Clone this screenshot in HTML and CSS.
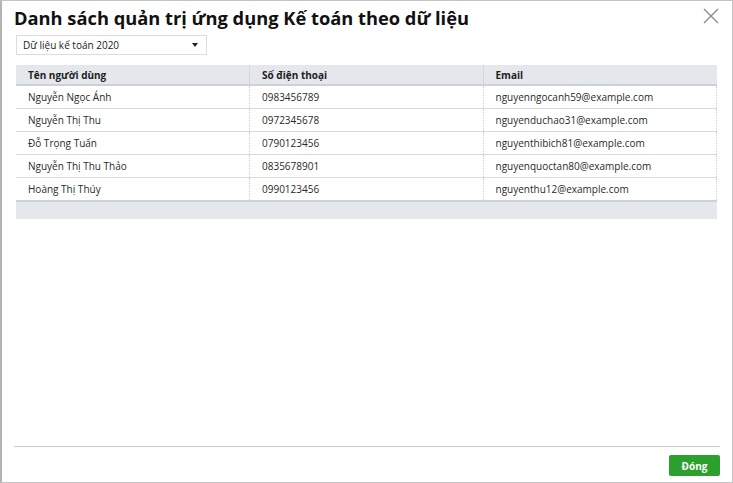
FILE: index.html
```html
<!DOCTYPE html>
<html lang="vi">
<head>
  <meta charset="UTF-8">
  <title>Danh sách quản trị ứng dụng Kế toán theo dữ liệu</title>
  <link rel="stylesheet" href="styles.css">
</head>
<body>
  <div class="dialog">
    <div class="dialog-header">
      <h1>Danh sách quản trị ứng dụng Kế toán theo dữ liệu</h1>
      <button class="close-button" aria-label="Đóng">
        <svg width="16" height="16" viewBox="0 0 16 16">
          <path d="M1 1 L15 15 M15 1 L1 15" stroke="#8a8a8a" stroke-width="1.4" fill="none"/>
        </svg>
      </button>
    </div>
    <div class="dialog-body">
      <div class="select-box">
        <span>Dữ liệu kế toán 2020</span>
        <span class="caret"></span>
      </div>
      <table class="grid">
        <thead>
          <tr>
            <th>Tên người dùng</th>
            <th>Số điện thoại</th>
            <th>Email</th>
          </tr>
        </thead>
        <tbody>
          <tr><td>Nguyễn Ngọc Ánh</td><td>0983456789</td><td>nguyenngocanh59@example.com</td></tr>
          <tr><td>Nguyễn Thị Thu</td><td>0972345678</td><td>nguyenduchao31@example.com</td></tr>
          <tr><td>Đỗ Trọng Tuấn</td><td>0790123456</td><td>nguyenthibich81@example.com</td></tr>
          <tr><td>Nguyễn Thị Thu Thảo</td><td>0835678901</td><td>nguyenquoctan80@example.com</td></tr>
          <tr><td>Hoàng Thị Thúy</td><td>0990123456</td><td>nguyenthu12@example.com</td></tr>
        </tbody>
        <tfoot>
          <tr><td colspan="3"></td></tr>
        </tfoot>
      </table>
    </div>
    <div class="dialog-footer">
      <button class="primary-button">Đóng</button>
    </div>
  </div>
</body>
</html>
```

FILE: styles.css
```css
html, body {
    height: 100%;
}
body {
    margin: 0;
    font-family: "Open Sans", "Noto Sans", sans-serif;
    color: #212121;
    background-color: #ffffff;
}
.dialog {
    box-sizing: border-box;
    height: 100%;
    border: 1px solid #c4c4c4;
    border-left: 2px solid #b4b4b4;
    display: flex;
    flex-direction: column;
}
.dialog-header {
    display: flex;
    justify-content: space-between;
    align-items: flex-start;
    padding: 4px 12px 0 12px;
}
.dialog-header h1 {
    margin: 0;
    font-size: 18.3px;
    font-weight: 700;
    line-height: 25px;
    color: #111;
}
.close-button {
    background: transparent;
    border: none;
    padding: 0;
    margin-top: 3px;
    margin-right: 1px;
    cursor: pointer;
    line-height: 0;
}
.dialog-body {
    flex: 1;
    padding: 5px 14px 0 14px;
}
.select-box {
    box-sizing: border-box;
    width: 191px;
    height: 20px;
    border: 1px solid #dcdcdc;
    display: flex;
    align-items: center;
    justify-content: space-between;
    padding: 0 6px 0 6px;
    font-size: 10px;
    color: #222;
    margin-bottom: 10px;
}
.caret {
    width: 0;
    height: 0;
    border-left: 3px solid transparent;
    border-right: 3px solid transparent;
    border-top: 4px solid #222;
    margin-right: 2px;
}
.grid {
    width: 701px;
    border-collapse: collapse;
    table-layout: fixed;
    font-size: 10px;
}
.grid th {
    background-color: #e4e8ed;
    text-align: left;
    font-weight: 700;
    height: 19px;
    padding: 0 12px;
    border-bottom: 2px solid #cdd0d4;
    border-left: 1px solid #d2d5d9;
}
.grid th:first-child,
.grid td:first-child {
    border-left: none;
}
.grid td {
    height: 22px;
    padding: 0 12px;
    border-bottom: 1px solid #dadada;
    border-left: 1px dotted #cfcfcf;
    color: #2a2a2a;
}
.grid tbody td:last-child {
    border-right: 1px dotted #cfcfcf;
}
.grid tbody tr:last-child td {
    border-bottom: 2px solid #cdd0d4;
}
.grid tfoot td {
    height: 17px;
    background-color: #e4e8ed;
    border: none;
}
.dialog-footer {
    margin: 0 12px;
    border-top: 1px solid #cccccc;
    padding: 8px 0 6px 0;
    display: flex;
    justify-content: flex-end;
}
.primary-button {
    background-color: #2ca02c;
    color: #ffffff;
    border: none;
    border-radius: 2px;
    font-family: inherit;
    font-size: 10px;
    font-weight: 700;
    width: 51px;
    height: 21px;
    cursor: pointer;
}
```
